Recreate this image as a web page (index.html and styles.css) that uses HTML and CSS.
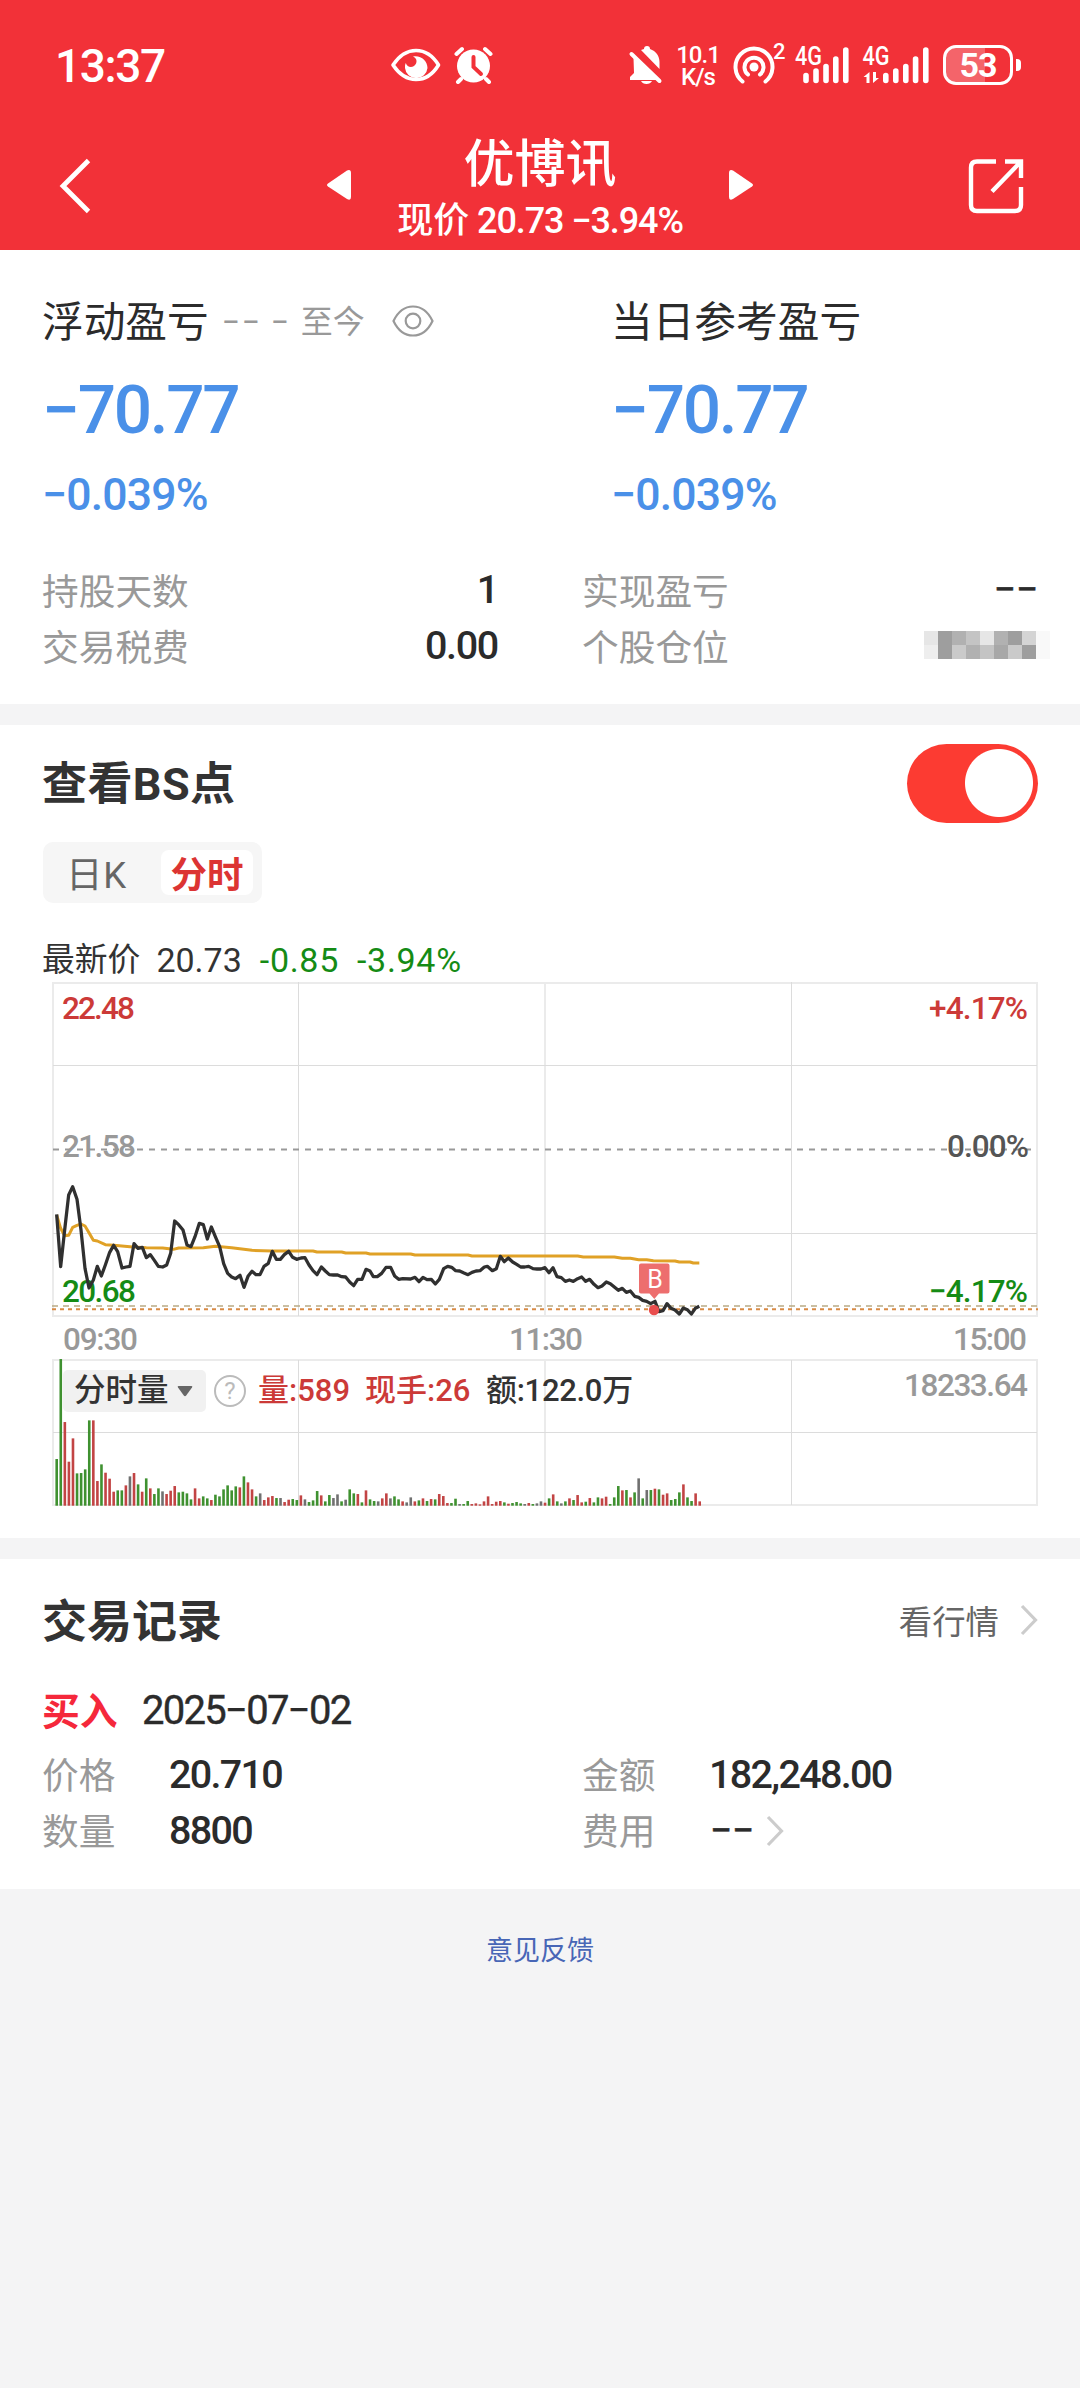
FILE: index.html
```html
<!DOCTYPE html>
<html lang="zh-CN">
<head>
<meta charset="utf-8">
<title>优博讯</title>
<link rel="stylesheet" href="styles.css">
</head>
<body>
<header class="top">
  <div class="status">
    <span class="clock">13:37</span>
    <svg class="status-mid" width="104" height="38" viewBox="390 45 104 38" fill="none" stroke="#fff">
      <path d="M393 64C399 55 407 49.500 416 49.500S433 55 438.500 64C433 73 425 78.500 416 78.500S399 73 393 64Z" stroke-width="3.600" stroke-linejoin="round"/>
      <path d="M413 55.500C421 54 427.500 60 427.500 67A11.300 11.300 0 0 1 405 67C405 65 405 63.500 405.800 62C407 66 411 67 414 65C418 62 417 57 413 55.500Z" fill="#fff" stroke="none"/>
      <circle cx="473.500" cy="65" r="16.500" fill="#fff" stroke="none"/>
      <path d="M461 78l-3 3M486 78l3 3M456.500 53l5.500-5M490.500 53l-5.500-5" stroke-width="4" stroke-linecap="round"/>
      <path d="M473.500 56v10l7.500 7" stroke="#f23138" stroke-width="4" stroke-linecap="round"/>
    </svg>
    <svg class="bell" width="36" height="38" viewBox="628 45 36 38">
      <path d="M641 49l3-1a3 3 0 0 1 6 0c6 2 9.500 7 9.500 13v7ZM633.500 57l24 22H630v-3l4-4ZM641 80h11c-1 2-3 3-5.500 3s-4.500-1-5.500-3Z" fill="#fff"/>
      <path d="M631.500 53l28 27" stroke="#fff" stroke-width="4" stroke-linecap="round"/>
    </svg>
    <span class="speed"><span>10.1</span><span>K/s</span></span>
    <svg class="spot" width="44" height="40" viewBox="732 44 44 40" fill="none" stroke="#fff" stroke-width="4" stroke-linecap="round">
      <circle cx="754" cy="66" r="4.500" fill="#fff" stroke="none"/>
      <path d="M748 73.500a9.500 9.500 0 1 1 12 0M742.500 80.500a18.500 18.500 0 1 1 23 0"/>
    </svg>
    <span class="spot-count">2</span>
    <svg class="signals" width="136" height="40" viewBox="795 44 136 40">
      <g stroke="#fff" stroke-width="5.600" stroke-linecap="round">
        <path d="M806 74.500V79.500M816 70V79.500M826 65.500V79.500M835.800 58V79.500M845.800 49V79.500"/>
        <path d="M885.800 74.500V79.500M895.800 70V79.500M905.800 65.500V79.500M915.600 58V79.500M925.800 49V79.500"/>
      </g>
      <path d="M863.500 76l6-5v11h-3v-6ZM879 77l-6 5V71h3v6Z" fill="#fff"/>
      <text x="795" y="64" textLength="27" lengthAdjust="spacingAndGlyphs">4G</text>
      <text x="862.500" y="64" textLength="27" lengthAdjust="spacingAndGlyphs">4G</text>
    </svg>
    <span class="battery">53</span>
  </div>
  <nav class="titlebar">
    <svg width="34" height="58" viewBox="59 157 34 58"><path d="M88.500 160.500L63 186L88.500 211.500" fill="none" stroke="#fff" stroke-width="4.800"/></svg>
    <svg class="prev" width="26" height="32" viewBox="0 0 26 32"><path d="M2 14.500L21 1.500Q25 0 25 4V28Q25 32 21 30L2 17.500Q0 16 2 14.500Z" fill="#fff"/></svg>
    <div class="title">
      <h1>优博讯</h1>
      <p><span class="zh">现价</span> 20.73 −3.94%</p>
    </div>
    <svg class="next" width="26" height="32" viewBox="0 0 26 32"><path d="M24 14.500L5 1.500Q1 0 1 4V28Q1 32 5 30L24 17.500Q26 16 24 14.500Z" fill="#fff"/></svg>
    <svg class="share" width="56" height="58" viewBox="968 158 56 58" fill="none" stroke="#fff" stroke-width="4.400"><path d="M996 161.500H977q-6 0-6 6V205q0 6 6 6H1015q6 0 6-6V187M1005 161.500H1021V178M1020 162.500L992 191.500"/></svg>
  </nav>
</header>

<section class="profit">
  <div class="pair">
    <div>
      <h2>浮动盈亏<span class="since"><i>−</i><i>−</i> <i class="gap">−</i> 至今</span>
        <svg width="42" height="32" viewBox="0 0 42 32" fill="none" stroke="#999" stroke-width="2.200"><path d="M1.500 16C6 6.500 13 1.500 21 1.500S36 6.500 40.500 16C36 25.500 29 30.500 21 30.500S6 25.500 1.500 16Z"/><circle cx="21" cy="16" r="7.300"/></svg>
      </h2>
      <p class="amount">−70.77</p>
      <p class="rate">−0.039%</p>
    </div>
    <div class="today">
      <h2>当日参考盈亏</h2>
      <p class="amount">−70.77</p>
      <p class="rate">−0.039%</p>
    </div>
  </div>
  <dl class="stats">
    <div><dt>持股天数</dt><dd>1</dd></div>
    <div><dt>实现盈亏</dt><dd class="dash">−−</dd></div>
    <div><dt>交易税费</dt><dd>0.00</dd></div>
    <div><dt>个股仓位</dt><dd class="mask"><b></b><b></b><b></b><b></b><b></b><b></b><b></b><b></b><b></b><b></b><b></b><b></b><b></b><b></b><b></b><b></b><b></b><b></b></dd></div>
  </dl>
</section>

<section class="bs">
  <div class="bs-head"><h3>查看BS点</h3><span class="toggle"></span></div>
  <div class="tabs"><span>日K</span><span class="on">分时</span></div>
  <p class="last"><span class="zh">最新价</span><span>20.73</span><span class="down">-0.85</span><span class="down">-3.94%</span></p>
  <div class="chart">
    <svg width="986" height="528" viewBox="52 980 986 528">
      <g fill="none" stroke="#ebebeb" stroke-width="2">
        <rect x="53" y="983" width="984" height="333"/>
        <rect x="53" y="1360" width="984" height="145"/>
        <path d="M545 982V1316M545 1360V1505"/>
      </g>
      <path class="grid" d="M298.500 982V1316M791.500 982V1316M298.500 1360V1505M791.500 1360V1505M53 1065.500H1037M53 1233.500H1037M53 1432.500H1037"/>
      <path d="M53 1149.500H1037" stroke="#999" stroke-width="1.800" stroke-dasharray="6 6"/>
      <g id="volume"></g>
      <g class="lbl">
        <text x="62" y="1019" textLength="73" class="up">22.48</text>
        <text x="62" y="1157" textLength="74" class="mute">21.58</text>
        <text x="62" y="1302" textLength="74" class="dn">20.68</text>
        <text x="929" y="1019" textLength="99" class="up">+4.17%</text>
        <text x="947" y="1157" textLength="82" class="flat">0.00%</text>
        <text x="929" y="1302" textLength="99" class="dn">−4.17%</text>
        <text x="63" y="1350" textLength="75" class="mute">09:30</text>
        <text x="509" y="1350" textLength="74" class="mute">11:30</text>
        <text x="953" y="1350" textLength="74" class="mute">15:00</text>
        <text x="904" y="1396" textLength="124" class="mute">18233.64</text>
      </g>
      <path d="M52 1306H1038" stroke="#b9ab85" stroke-width="1.600" stroke-dasharray="6 5"/>
      <path d="M52 1309.300H1038" stroke="#d98a45" stroke-width="2" stroke-dasharray="4 4"/>
      <g transform="translate(40 1130) scale(.33333)" fill="none" stroke-linejoin="round">
        <polyline stroke="#e0a126" stroke-width="9" points="50,255 62,295 74,317 86,316 98,292 111,286 123,282 135,288 147,308 160,331 172,333 196,344 221,346 270,350 319,353 368,354 400,358 416,354 490,353 526,349 575,353 636,361 697,363 819,363 831,366 905,366 917,369 978,369 990,372 1112,372 1125,375 1284,375 1296,378 1613,378 1630,381 1723,381 1747,385 1771,385 1796,389 1820,389 1840,392 1905,393 1918,396 1950,396 1960,399 1978,399"/>
        <polyline stroke="#303030" stroke-width="9.800" points="50,253 62,410 74,300 86,195 98,170 111,208 123,300 135,415 147,474 160,450 172,409 184,438 196,405 209,367 221,346 233,365 246,414 258,411 270,409 282,341 294,355 307,352 319,383 331,374 343,391 355,409 368,411 380,405 392,370 404,273 416,284 429,300 441,345 453,350 465,320 478,280 490,284 502,327 514,291 526,320 539,350 551,401 563,430 575,441 587,446 600,436 612,472 624,439 636,424 648,434 660,434 672,409 685,400 697,364 709,388 721,388 733,374 746,364 758,382 770,388 783,384 795,383 807,405 819,422 831,434 844,411 856,423 868,434 880,435 893,435 905,440 917,441 929,456 941,467 953,448 966,448 978,418 990,423 1000,440 1012,440 1025,430 1038,412 1052,412 1064,438 1076,448 1088,446 1112,447 1125,442 1137,455 1149,442 1161,449 1174,448 1186,462 1198,448 1211,416 1223,409 1235,412 1247,422 1259,423 1272,429 1284,434 1296,427 1308,423 1320,422 1333,411 1342,409 1357,422 1369,416 1381,379 1393,395 1405,384 1418,396 1430,403 1442,411 1454,411 1466,409 1479,416 1491,417 1503,417 1515,413 1527,428 1539,413 1551,440 1564,443 1576,454 1588,450 1600,454 1613,446 1625,441 1637,454 1649,448 1662,463 1674,473 1686,468 1699,456 1711,461 1723,471 1735,481 1747,475 1759,487 1771,483 1784,499 1796,502 1808,511 1820,514 1832,521 1845,514 1857,545 1869,542 1881,521 1893,535 1905,540 1918,552 1930,534 1942,539 1954,552 1966,535 1978,529"/>
      </g>
      <path d="M641 1263.500H667.500Q669.500 1263.500 669.500 1265.500V1291.500Q669.500 1293.500 667.500 1293.500H659L654.300 1299L649.500 1293.500H641Q639 1293.500 639 1291.500V1265.500Q639 1263.500 641 1263.500Z" fill="#ed6e6e"/>
      <circle cx="654" cy="1310" r="5.200" fill="#e94d4d"/>
      <text x="655" y="1288" text-anchor="middle" class="mark">B</text>
    </svg>
    <div class="vol">
      <span class="pick">分时量<svg width="16" height="11" viewBox="0 0 16 11"><path d="M1.500 0H14.500Q16 0 15 1.500L9.200 9.500Q8 11 6.800 9.500L1 1.500Q0 0 1.500 0Z" fill="#666"/></svg></span>
      <span class="help">?</span>
      <span class="v1">量:589</span><span class="v2">现手:26</span><span class="v3">额:122.0万</span>
    </div>
  </div>
</section>

<section class="trades">
  <div class="trades-head"><h3>交易记录</h3><a>看行情<svg width="18" height="32" viewBox="0 0 18 32"><path d="M2 2L15.500 16L2 30" fill="none" stroke="#ccc" stroke-width="3.200"/></svg></a></div>
  <p class="deal"><b>买入</b><span>2025−07−02</span></p>
  <dl class="detail">
    <div><dt>价格</dt><dd>20.710</dd></div>
    <div><dt>金额</dt><dd>182,248.00</dd></div>
    <div><dt>数量</dt><dd>8800</dd></div>
    <div><dt>费用</dt><dd class="dash">−−</dd><svg width="18" height="32" viewBox="0 0 18 32"><path d="M2 2L15.500 16L2 30" fill="none" stroke="#ccc" stroke-width="3.200"/></svg></div>
  </dl>
</section>
<footer>意见反馈</footer>
<script src="chart.js"></script>
</body>
</html>
```
FILE: styles.css
```css
* { margin: 0; padding: 0; box-sizing: border-box; }
body {
  width: 1080px;
  height: 2388px;
  overflow: hidden;
  background: #f4f4f5;
  color: #2b2b2b;
  font-family: Roboto, "Noto Sans CJK SC", sans-serif;
  white-space: nowrap;
}
svg { display: block; flex: none; }
i, b { font-style: normal; }

.top { height: 250px; background: #f23138; color: #fff; }
.status { height: 130px; padding-left: 56px; display: flex; align-items: center; }
.clock { width: 334px; margin-left: -1px; margin-right: 1px; font-size: 46px; font-weight: 500; letter-spacing: -1.4px; padding-top: 2px; }
.status-mid { margin-right: 134px; }
.speed { display: flex; flex-direction: column; width: 56px; margin-left: 6px; padding-top: 2px; align-items: center; font-size: 24px; line-height: 22px; font-weight: 500; letter-spacing: -1px; }
.spot { margin-left: 6px; }
.spot-count { width: 22px; margin-left: -3px; margin-top: -27px; font-size: 22px; line-height: 24px; font-weight: 500; }
.signals { overflow: visible; }
.signals text { font: 500 25px Roboto, sans-serif; fill: #fff; }
.battery {
  position: relative;
  width: 70px;
  height: 40px;
  margin-left: 12px;
  border: 3px solid #fff;
  border-radius: 13px;
  background: linear-gradient(90deg, #f4646a 39px, #f23138 39px);
  font-size: 34px;
  font-weight: 700;
  line-height: 34px;
  letter-spacing: -1px;
  text-align: center;
}
.battery::after {
  content: "";
  position: absolute;
  right: -11px;
  top: 11px;
  width: 5px;
  height: 12px;
  border-radius: 0 4px 4px 0;
  background: #fff;
}

.titlebar { height: 120px; padding-left: 59px; display: flex; align-items: flex-start; }
.titlebar > svg { margin-top: 27px; }
.titlebar .prev { margin: 39px 0 0 233px; }
.title { width: 376px; padding-top: 2px; text-align: center; }
.title h1 { height: 65px; line-height: 65px; font-size: 51px; font-weight: 500; }
.title p { height: 48px; line-height: 48px; font-size: 36px; font-weight: 500; letter-spacing: -1.1px; }
.title .zh { letter-spacing: 0; }
.titlebar .next { margin: 39px 0 0; }
.titlebar .share { margin: 28px 0 0 214px; }

section { background: #fff; }
.profit { height: 454px; padding: 40px 42px 0; }
.pair { display: grid; grid-template-columns: 569px 1fr; }
.pair h2 { height: 65px; line-height: 65px; font-size: 41.7px; font-weight: 400; display: flex; align-items: center; }
.since { display: flex; margin-left: 12px; font-size: 32px; color: #999; }
.since i { width: 20px; text-align: center; }
.since .gap { margin: 0 11px 0 9px; }
.pair h2 svg { margin-left: 27px; margin-top: -4px; }
.amount { height: 110px; line-height: 110px; font-size: 67.5px; font-weight: 500; letter-spacing: -2.3px; color: #4a90e8; }
.rate { height: 58px; line-height: 58px; font-size: 44.5px; font-weight: 500; letter-spacing: -.8px; padding-top: 1px; color: #4a90e8; }
.stats { margin-top: 38px; display: grid; grid-template-columns: 456px 456px; column-gap: 84px; }
.stats div { height: 56px; display: flex; justify-content: space-between; align-items: center; }
dt { font-size: 36.7px; line-height: 52px; padding-top: 4px; color: #999; }
.stats dt { padding-top: 7px; }
dd { font-size: 39.5px; font-weight: 500; letter-spacing: -1.3px; line-height: 56px; }
.stats dd { padding-top: 1px; }
.stats .dash, .detail .dash { font-weight: 400; letter-spacing: -.5px; -webkit-text-stroke: .4px currentColor; }
.stats .mask { width: 126px; height: 28px; padding: 0; margin-right: -12px; display: grid; grid-template-columns: repeat(9, 14px); grid-auto-rows: 14px; }
.mask b { background: #9e9e9e; }
.mask b:nth-child(1), .mask b:nth-child(5) { background: #e6e6e6; }
.mask b:nth-child(3), .mask b:nth-child(6), .mask b:nth-child(13) { background: #b1b1b1; }
.mask b:nth-child(4), .mask b:nth-child(14) { background: #c4c4c4; }
.mask b:nth-child(8) { background: #d4d4d4; }
.mask b:nth-child(9), .mask b:nth-child(18) { background: #f9f9f9; }
.mask b:nth-child(10) { background: #eee; }
.mask b:nth-child(12), .mask b:nth-child(16) { background: #cacaca; }
.mask b:nth-child(15) { background: #a8a8a8; }

.bs { margin-top: 21px; height: 813px; padding: 0 42px; }
h3 { font-size: 45px; font-weight: 700; color: #333; line-height: 60px; }
.bs h3 { letter-spacing: .4px; }
.bs-head { height: 117px; display: flex; justify-content: space-between; align-items: center; padding-top: 2px; }
.toggle { width: 131px; height: 79px; margin-top: -3px; border-radius: 40px; background: radial-gradient(circle 34px at 92px 39px, #fff 33.500px, #fc3b32 34.500px); }
.tabs { width: 219px; height: 61px; margin-left: 1px; padding: 8px 9px; display: flex; border-radius: 10px; background: #f6f6f6; font-size: 36.500px; line-height: 51px; color: #666; }
.tabs span { height: 45px; flex: 1; padding-left: 14px; letter-spacing: .8px; }
.tabs .on { flex: none; width: 92px; padding: 0; letter-spacing: 0; border-radius: 8px; background: #fff; font-weight: 700; color: #dc3433; text-align: center; }
.last { height: 77px; margin-top: 0; padding-top: 23px; line-height: 68px; font-size: 34px; display: flex; color: #333; }
.last span { margin-right: 18px; }
.last .zh { font-size: 32.8px; margin-right: 16px; }
.last .down { color: #158b15; letter-spacing: .7px; }

.chart { position: relative; width: 986px; height: 528px; margin-left: 10px; }
.grid { stroke: #dcdcdc; stroke-width: 1; }
.lbl { font: 500 31.500px Roboto, sans-serif; }
.up { fill: #cc3a38; }
.dn { fill: #158b15; }
.mute { fill: #999; }
.flat { fill: #555; }
.mark { font: 400 25px Roboto, sans-serif; fill: #fff; }
.vol { position: absolute; left: 11px; top: 390px; height: 42px; display: flex; align-items: center; font-size: 31px; line-height: 42px; font-weight: 500; color: #cc3a38; }
.pick { width: 143px; height: 42px; padding-left: 11px; line-height: 46px; display: flex; align-items: center; gap: 8px; border-radius: 5px; background: #f1f1f1; color: #333; font-size: 31.500px; }
.help { width: 32px; height: 32px; margin: 0 12px 0 8px; border: 2px solid #bbb; border-radius: 50%; text-align: center; font-size: 24px; line-height: 28px; font-weight: 400; color: #bbb; }
.v1 { width: 107px; }
.v2 { width: 121px; }
.v3 { color: #333; letter-spacing: -.3px; }

.trades { margin-top: 21px; height: 330px; padding: 0 42px; }
.trades-head { height: 126px; display: flex; justify-content: space-between; align-items: center; padding-top: 2px; }
.trades-head a { display: flex; align-items: center; gap: 21px; margin-top: -7px; font-size: 33.400px; color: #666; }
.deal { height: 50px; line-height: 50px; display: flex; align-items: center; }
.deal b { width: 100px; font-size: 37.800px; color: #f5283b; padding-top: 4px; }
.deal span { font-size: 40px; font-weight: 400; letter-spacing: -1.700px; padding-top: 2px; -webkit-text-stroke: .4px currentColor; }
.detail { margin-top: 12px; display: grid; grid-template-columns: 540px 1fr; }
.detail div { height: 56px; display: flex; align-items: center; }
.detail dt { width: 127px; }
.detail dd { letter-spacing: -1.700px; }
.detail .dash { padding-left: 1px; }
.detail svg { margin-left: 12px; }

footer { padding-top: 42px; line-height: 40px; text-align: center; font-size: 27px; color: #4866b6; }
```
FILE: chart.js
```js
// One entry per minute: colour (g falling, r rising, k unchanged) and height.
const bars = `g140 g440 r251 r132 r202 g97 g98 g109 g256 r256 r74 g124 r99 r81 r42 g46 g46 r61 k88 r98
g64 r42 g82 r52 g35 g52 k43 r35 r45 r59 g40 g42 g37 g19 r52 r22 g28 g22 r17 g33 g28 g49 g61 g46 g58 r55
g88 r70 r49 g28 k37 r17 r25 r29 g23 k23 r11 r18 g20 g17 r31 k19 g11 g16 g44 r31 g13 g32 k23 k34 g13 k18
g49 g37 r35 g10 r46 g19 g14 k13 r22 r37 k22 g28 g19 r13 k10 k25 r13 g16 r22 g14 r20 g19 r35 r29 r8 g8
g21 k5 g5 g14 r5 r7 r4 r13 r28 r5 r12 r14 g10 r6 g8 g11 g7 k5 r8 g5 k7 k13 r9 g22 r34 g13 k7 g13 r22 g17
r32 r10 g12 r23 g10 g25 r22 r27 g5 g25 g59 r46 g47 r25 g40 k82 g22 k47 g47 r51 g49 r33 r37 g17 g20 g40
r64 g25 g14 r37 r13`.split(/\s+/);

const colors = { g: "#3f9130", r: "#c24444", k: "#707070" };
const first = 56.7;
const step = (699.7 - first) / (bars.length - 1);
const bottom = 1505.7;
const volume = document.getElementById("volume");

bars.forEach((bar, i) => {
  const height = bar.slice(1) / 3;
  const rect = document.createElementNS("http://www.w3.org/2000/svg", "rect");
  rect.setAttribute("x", (first + i * step - 1.3).toFixed(2));
  rect.setAttribute("y", (bottom - height).toFixed(2));
  rect.setAttribute("width", 2.6);
  rect.setAttribute("height", height.toFixed(2));
  rect.setAttribute("fill", colors[bar[0]]);
  volume.append(rect);
});
```
